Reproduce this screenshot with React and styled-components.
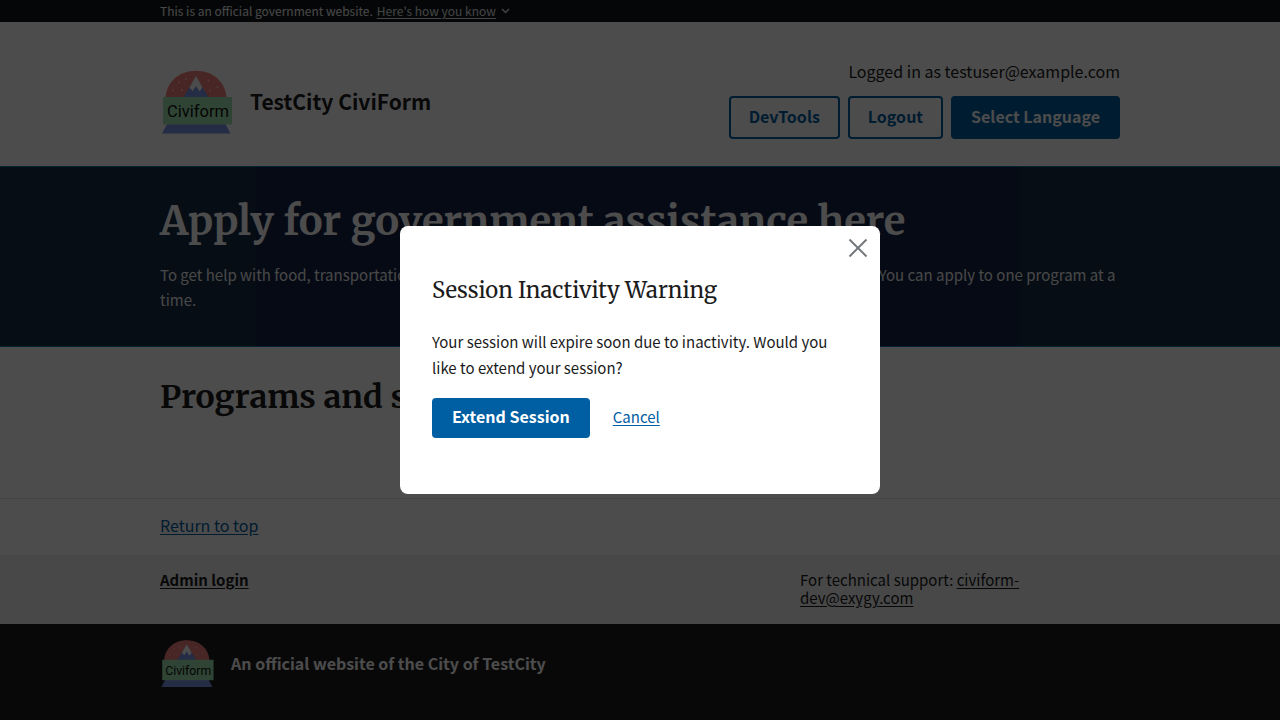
import React from 'react';
import styled, { createGlobalStyle, css } from 'styled-components';

const ink = '#1b1b1b';
const blue = '#005ea2';

const GlobalStyle = createGlobalStyle`
  *, *::before, *::after { box-sizing: border-box; }
  html, body { margin: 0; }
  body {
    background: #fff;
    color: ${ink};
    font-family: "Source Sans Pro", "Noto Sans CJK SC", sans-serif;
    font-size: 15px;
    line-height: 24px;
  }
  h1, h2, p { margin: 0; }
  button { font-family: inherit; cursor: pointer; }
`;

const Container = styled.div`
  width: 75%;
  max-width: 1024px;
  margin: 0 auto;
`;

const serif = css`
  font-family: "Merriweather", "DejaVu Serif Condensed", "DejaVu Serif", serif;
`;

const Banner = styled.div`
  background: #11171a;
  color: #f0f0f0;
  font-size: 12px;
  line-height: 22px;
`;

const BannerRow = styled(Container)`
  display: flex;
  align-items: center;
  gap: 4px;
`;

const BannerToggle = styled.button`
  display: flex;
  align-items: center;
  gap: 5px;
  padding: 0;
  border: 0;
  background: none;
  color: #dfe1e2;
  font-size: 12px;
  line-height: 22px;
  span { text-decoration: underline; text-underline-offset: 2px; }
`;

const Header = styled.header`
  padding: 37px 0 27px;
`;

const HeaderRow = styled(Container)`
  display: flex;
  justify-content: space-between;
  align-items: flex-end;
`;

const Brand = styled.div`
  display: flex;
  align-items: center;
  gap: 16px;
`;

const BrandName = styled.span`
  padding-bottom: 2px;
  font-size: ${(p) => (p.$large ? 21 : 16)}px;
  font-weight: 700;
  line-height: 24px;
`;

const Account = styled.div`
  display: flex;
  flex-direction: column;
  align-items: flex-end;
  gap: 13px;
  font-size: 16px;
`;

const Actions = styled.div`
  display: flex;
  gap: 8px;
`;

const Button = styled.button`
  height: ${(p) => (p.$compact ? 40 : 43)}px;
  padding: 0 20px 4px;
  border: 0;
  border-radius: 4px;
  background: ${(p) => (p.$outline ? 'transparent' : blue)};
  box-shadow: ${(p) => (p.$outline ? `inset 0 0 0 2px ${blue}` : 'none')};
  color: ${(p) => (p.$outline ? blue : '#fff')};
  font-size: 16px;
  font-weight: 700;
  line-height: 16px;
`;

const Hero = styled.section`
  padding: 28px 0 34px;
  border: solid #0076b0;
  border-width: 1px 0;
  background: linear-gradient(90deg, #152c44 20%, #122245 20%, #122245 79%, #152c44 80%);
  color: #fff;
`;

const HeroTitle = styled.h1`
  ${serif}
  font-size: 40px;
  line-height: 52px;
`;

const HeroText = styled.p`
  margin-top: 15px;
  color: #f0f0f0;
  line-height: 25px;
`;

const Programs = styled.main`
  min-height: 151px;
  padding-top: 30px;
`;

const SectionTitle = styled.h2`
  ${serif}
  font-size: 32px;
  line-height: 40px;
`;

const ReturnBar = styled.div`
  padding: 14px 0 18px;
  border-top: 1px solid #dfe1e2;
  font-size: 16px;
`;

const Link = styled.a`
  color: ${(p) => (p.$dark ? ink : blue)};
  font-weight: ${(p) => (p.$bold ? 700 : 400)};
  text-decoration: underline;
  text-underline-offset: 2px;
`;

const SupportBar = styled.div`
  padding: 16px 0 17px;
  background: #f0f0f0;
  line-height: 18px;
`;

const SupportGrid = styled(Container)`
  display: grid;
  grid-template-columns: 2fr 1fr;
`;

const Support = styled.p`
  padding-right: 64px;
`;

const Identifier = styled.div`
  min-height: 96px;
  padding: 12px 0;
  background: ${ink};
  color: #fff;
`;

const Overlay = styled.div`
  position: fixed;
  inset: 0;
  display: flex;
  align-items: center;
  justify-content: center;
  background: rgba(0, 0, 0, 0.7);
`;

const Modal = styled.div`
  position: relative;
  width: 480px;
  max-width: 100%;
  padding: 48px 32px 56px;
  border-radius: 8px;
  background: #fff;
`;

const ModalTitle = styled.h2`
  ${serif}
  font-size: 22px;
  font-weight: 400;
  line-height: 32px;
`;

const ModalText = styled.p`
  margin-top: 23px;
  line-height: 26px;
`;

const ModalActions = styled.div`
  display: flex;
  align-items: center;
  gap: 23px;
  margin-top: 17px;
`;

const TextButton = styled.button`
  padding: 0 0 2px;
  border: 0;
  background: none;
  color: ${blue};
  font-size: 15px;
  line-height: 24px;
  text-decoration: underline;
  text-underline-offset: 2px;
`;

const CloseButton = styled.button`
  position: absolute;
  top: 6px;
  right: 6px;
  display: flex;
  padding: 0;
  border: 0;
  background: none;
  color: #71767a;
`;

function Logo({ size }) {
  return (
    <svg width={size} height={size} viewBox="0 0 74 74" role="img" aria-label="Civiform">
      <path d="M5.500 33.500C6 17 19 5.700 36 5.700S66 17 66.500 33.500Z" fill="#f38181" />
      <path d="M23 33L36 11.500 49 33Z" fill="#7895eb" />
      <path d="M36 11L42.500 22.500 39.500 26.500 36 21 32.700 26 29.500 22.500Z" fill="#fff" />
      <g fill="#ffc9b5">
        <circle cx="19" cy="17.500" r="0.900" />
        <circle cx="26" cy="14" r="0.900" />
        <circle cx="13" cy="25.500" r="0.900" />
        <circle cx="22" cy="25" r="0.900" />
        <circle cx="48.500" cy="15.500" r="0.900" />
        <circle cx="57.500" cy="22" r="0.900" />
        <circle cx="50" cy="25.500" r="0.900" />
      </g>
      <path d="M7 59H65.500L70.500 68.500H2Z" fill="#7895eb" />
      <rect x="3" y="32" width="69" height="27.500" fill="#9fe5b0" />
      <text x="38" y="52" textAnchor="middle" fontFamily="Roboto, sans-serif" fontSize="16.500" fontWeight="400" fill="#111">
        Civiform
      </text>
    </svg>
  );
}

export default function App() {
  return (
    <>
      <GlobalStyle />
      <Banner>
        <BannerRow>
          <span>This is an official government website.</span>
          <BannerToggle type="button">
            <span>Here's how you know</span>
            <svg width="9" height="6" viewBox="0 0 9 6" fill="none" stroke="currentColor" strokeWidth="1.500" aria-hidden="true">
              <path d="M1 1l3.500 3.500L8 1" />
            </svg>
          </BannerToggle>
        </BannerRow>
      </Banner>
      <Header>
        <HeaderRow>
          <Brand>
            <Logo size={74} />
            <BrandName $large>TestCity CiviForm</BrandName>
          </Brand>
          <Account>
            <span>Logged in as testuser@example.com</span>
            <Actions>
              <Button type="button" $outline>DevTools</Button>
              <Button type="button" $outline>Logout</Button>
              <Button type="button">Select Language</Button>
            </Actions>
          </Account>
        </HeaderRow>
      </Header>
      <Hero>
        <Container>
          <HeroTitle>Apply for government assistance here</HeroTitle>
          <HeroText>
            To get help with food, transportation, housing, and more, apply to programs using CiviForm in TestCity. You can apply to one program at a time.
          </HeroText>
        </Container>
      </Hero>
      <Programs>
        <Container>
          <SectionTitle>Programs and services</SectionTitle>
        </Container>
      </Programs>
      <footer>
        <ReturnBar>
          <Container>
            <Link href="#">Return to top</Link>
          </Container>
        </ReturnBar>
        <SupportBar>
          <SupportGrid>
            <div>
              <Link href="#" $dark $bold>Admin login</Link>
            </div>
            <Support>
              For technical support: <Link href="mailto:civiform-dev@exygy.com" $dark>civiform-dev@exygy.com</Link>
            </Support>
          </SupportGrid>
        </SupportBar>
        <Identifier>
          <Container>
            <Brand>
              <Logo size={55} />
              <BrandName>An official website of the City of TestCity</BrandName>
            </Brand>
          </Container>
        </Identifier>
      </footer>
      <Overlay>
        <Modal role="dialog" aria-modal="true" aria-labelledby="session-title">
          <CloseButton type="button" aria-label="Close">
            <svg width="32" height="32" viewBox="0 0 32 32" fill="none" stroke="currentColor" strokeWidth="1.900" aria-hidden="true">
              <path d="M7.500 7.500l17 17M24.500 7.500l-17 17" />
            </svg>
          </CloseButton>
          <ModalTitle id="session-title">Session Inactivity Warning</ModalTitle>
          <ModalText>
            Your session will expire soon due to inactivity. Would you like to extend your session?
          </ModalText>
          <ModalActions>
            <Button type="button" $compact>Extend Session</Button>
            <TextButton type="button">Cancel</TextButton>
          </ModalActions>
        </Modal>
      </Overlay>
    </>
  );
}
